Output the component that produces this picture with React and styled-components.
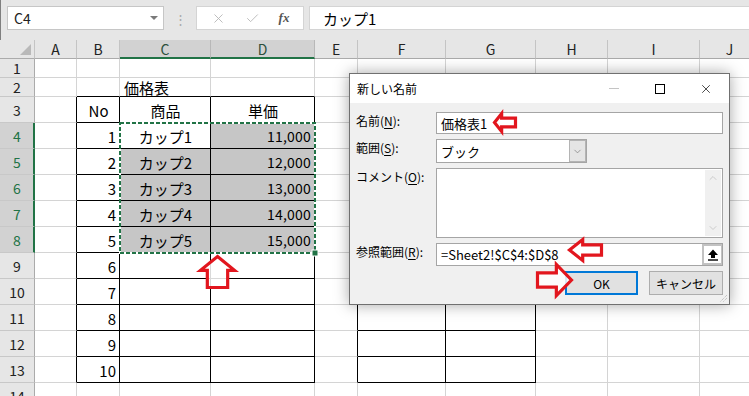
import React from "react";
import styled, { createGlobalStyle } from "styled-components";
import { X, Check, ChevronUp, ChevronDown } from "lucide-react";

const SHEET_FONT = `"Noto Sans CJK JP", "Liberation Sans", sans-serif`;
const UI_FONT = `"Noto Sans CJK JP", "Noto Sans", sans-serif`;
const GREEN = "#217346";
const RED = "#e2161e";

const GlobalStyle = createGlobalStyle`
  html, body {
    margin: 0;
    padding: 0;
    background: #fff;
    overflow: hidden;
  }
  * {
    box-sizing: border-box;
  }
`;

const Window = styled.div`
  position: relative;
  width: 749px;
  height: 396px;
  overflow: hidden;
  background: #fff;
  font-family: ${SHEET_FONT};
  color: #000;
`;

/* formula bar */
const FormulaBar = styled.div`
  display: flex;
  align-items: flex-start;
  height: 40px;
  padding: 6px 0 0 6px;
  background: #e6e6e6;
  border-left: 1px solid #7f7f7f;
`;
const NameBox = styled.div`
  display: flex;
  align-items: center;
  justify-content: space-between;
  width: 157px;
  height: 24px;
  padding: 0 5px 0 6px;
  background: #fff;
  border: 1px solid #c6c6c6;
  font-size: 14px;
  color: #222;
`;
const DropTriangle = styled.span`
  width: 0;
  height: 0;
  border-left: 4px solid transparent;
  border-right: 4px solid transparent;
  border-top: 4px solid #7a7a7a;
`;
const Grip = styled.div`
  display: flex;
  align-items: center;
  justify-content: center;
  width: 32px;
  height: 24px;
  color: #a9a9a9;
  font-size: 13px;
`;
const FxBox = styled.div`
  display: flex;
  align-items: center;
  justify-content: space-around;
  width: 108px;
  height: 24px;
  padding: 0 4px;
  background: #fff;
  border: 1px solid #d4d4d4;
  color: #b5b5b5;
`;
const FxLabel = styled.span`
  font-family: "Liberation Serif", serif;
  font-style: italic;
  font-weight: bold;
  font-size: 13px;
  color: #555;
`;
const FormulaInput = styled.div`
  display: flex;
  align-items: center;
  flex: 1;
  height: 24px;
  margin-left: 5px;
  padding-left: 13px;
  background: #fff;
  border: 1px solid #d4d4d4;
  border-right: none;
  font-size: 15px;
`;

/* sheet grid */
const Sheet = styled.div`
  display: grid;
  grid-template-columns: 35px 42px 43px 91px 104px 43px 88px 90px 72px 92px 60px;
  grid-template-rows: 19px 19px 19px repeat(12, 26px);
`;
const Corner = styled.div`
  position: relative;
  background: #e6e6e6;
  border-right: 1px solid #c4c4c4;
  border-bottom: 1px solid #ababab;
  &::after {
    content: "";
    position: absolute;
    right: 3px;
    bottom: 3px;
    border-left: 11px solid transparent;
    border-bottom: 11px solid #b9b9b9;
  }
`;
const ColHeader = styled.div`
  display: flex;
  align-items: center;
  justify-content: center;
  background: ${(p) => (p.$selected ? "#d2d2d2" : "#e6e6e6")};
  border-right: 1px solid ${(p) => (p.$selected ? "#b8b8b8" : "#c4c4c4")};
  border-bottom: ${(p) => (p.$selected ? `2px solid ${GREEN}` : "1px solid #ababab")};
  color: ${(p) => (p.$selected ? "#2d4f3c" : "#222")};
  font-size: 14px;
`;
const RowHeader = styled.div`
  display: flex;
  align-items: center;
  justify-content: center;
  background: ${(p) => (p.$selected ? "#d2d2d2" : "#e6e6e6")};
  border-right: ${(p) => (p.$selected ? `2px solid ${GREEN}` : "1px solid #ababab")};
  border-bottom: 1px solid #c8c8c8;
  color: ${(p) => (p.$selected ? GREEN : "#222")};
  font-size: 14px;
  padding-left: ${(p) => (p.$selected ? "1px" : "0")};
`;
const Cell = styled.div`
  display: flex;
  align-items: center;
  justify-content: ${(p) =>
    p.$align === "right" ? "flex-end" : p.$align === "center" ? "center" : "flex-start"};
  padding: 1px 3px 0 4px;
  background: ${(p) => (p.$fill ? "#c6c6c6" : "#fff")};
  border-right: 1px solid ${(p) => (p.$rightDark ? "#000" : "#d4d4d4")};
  border-bottom: 1px solid ${(p) => (p.$bottomDark ? "#000" : "#d4d4d4")};
  font-size: ${(p) => (p.$numeric ? "14px" : "15px")};
  letter-spacing: ${(p) => (p.$numeric ? "0.2px" : "0")};
  white-space: nowrap;
  overflow: visible;
`;

const Ants = styled.svg`
  position: absolute;
  left: 119px;
  top: 122px;
  overflow: visible;
`;

/* dialog */
const Dialog = styled.div`
  position: absolute;
  left: 349px;
  top: 73px;
  width: 381px;
  height: 232px;
  display: flex;
  flex-direction: column;
  background: #f0f0f0;
  border: 1px solid #707070;
  box-shadow: 0 0 14px rgba(0, 0, 0, 0.35);
  font-family: ${UI_FONT};
  font-size: 12px;
  color: #000;
`;
const TitleBar = styled.div`
  display: flex;
  align-items: center;
  height: 29px;
  padding-left: 7px;
  background: #fff;
`;
const Title = styled.div`
  flex: 1;
  font-size: 12px;
`;
const TitleButton = styled.div`
  display: flex;
  align-items: center;
  justify-content: center;
  width: 46px;
  height: 29px;
`;
const MinLine = styled.span`
  width: 10px;
  height: 1px;
  background: #c4c4c4;
`;
const MaxBox = styled.span`
  width: 10px;
  height: 10px;
  border: 1px solid #000;
`;
const Form = styled.div`
  display: grid;
  grid-template-columns: 80px 287px;
  grid-template-rows: 22px 24px 70px 23px 24px;
  row-gap: 5px;
  padding: 9px 0 0 6px;
`;
const Label = styled.div`
  padding-top: 1px;
  line-height: 16px;
  font-size: 12px;
  white-space: nowrap;
  u {
    text-decoration-thickness: 1px;
    text-underline-offset: 2px;
  }
`;
const TextBox = styled.div`
  display: flex;
  align-items: center;
  width: ${(p) => (p.$width ? `${p.$width}px` : "100%")};
  padding-left: 4px;
  background: #fff;
  border: 1px solid #a5a5a5;
  font-size: 13px;
  white-space: nowrap;
`;
const TextValue = styled.span`
  flex: 1;
`;
const SelectButton = styled.div`
  display: flex;
  align-items: center;
  justify-content: center;
  width: 17px;
  height: 100%;
  background: #e5e5e5;
  border: 1px solid #b4b4b4;
  color: #777;
`;
const TextArea = styled.div`
  display: flex;
  justify-content: flex-end;
  padding: 1px;
  background: #fff;
  border: 1px solid #a5a5a5;
`;
const ScrollStrip = styled.div`
  display: flex;
  flex-direction: column;
  justify-content: space-between;
  align-items: center;
  width: 16px;
  padding: 2px 0;
  background: #f0f0f0;
  color: #c2c2c2;
`;
const CollapseButton = styled.div`
  display: flex;
  align-items: center;
  justify-content: center;
  width: 20px;
  height: 100%;
  background: #fff;
  border: 2px solid #c2c2c2;
  border-right-width: 1px;
`;
const ButtonRow = styled.div`
  grid-column: 1 / -1;
  display: flex;
  justify-content: flex-end;
  gap: 11px;
`;
const Button = styled.div`
  display: flex;
  align-items: center;
  justify-content: center;
  width: ${(p) => p.$width}px;
  height: 24px;
  background: #e1e1e1;
  border: ${(p) => (p.$default ? "2px solid #0078d7" : "1px solid #adadad")};
  font-size: 12px;
`;
const ResizeGrip = styled.svg`
  position: absolute;
  right: 1px;
  bottom: 1px;
`;

const Pointer = styled.svg`
  position: absolute;
  left: ${(p) => p.$x}px;
  top: ${(p) => p.$y}px;
  overflow: visible;
`;

function RedArrow({ dir, x, y, w, h, shaft = 0.42, head = 0.45 }) {
  const s = 1.5;
  let pts;
  if (dir === "left" || dir === "right") {
    const t = (h * (1 - shaft)) / 2;
    const b = h - t;
    const hx = w * head;
    pts = [[s, h / 2], [hx, s], [hx, t], [w - s, t], [w - s, b], [hx, b], [hx, h - s]];
    if (dir === "right") pts = pts.map(([px, py]) => [w - px, py]);
  } else {
    const l = (w * (1 - shaft)) / 2;
    const r = w - l;
    const hy = h * head;
    pts = [[w / 2, s], [w - s, hy], [r, hy], [r, h - s], [l, h - s], [l, hy], [s, hy]];
  }
  return (
    <Pointer $x={x} $y={y} width={w} height={h}>
      <polygon
        points={pts.map((p) => p.join(",")).join(" ")}
        fill="#fff"
        fillOpacity="0.85"
        stroke={RED}
        strokeWidth="3.2"
        strokeLinejoin="miter"
      />
    </Pointer>
  );
}

const COLS = ["A", "B", "C", "D", "E", "F", "G", "H", "I", "J"];
const ROWS = Array.from({ length: 14 }, (_, i) => i + 1);

const contents = {
  C2: { text: "価格表", align: "left" },
  B3: { text: "No", align: "center" },
  C3: { text: "商品", align: "center" },
  D3: { text: "単価", align: "center" },
};
for (let i = 1; i <= 10; i++) contents[`B${i + 3}`] = { text: String(i), align: "right" };
["11,000", "12,000", "13,000", "14,000", "15,000"].forEach((price, i) => {
  contents[`C${i + 4}`] = { text: `カップ${i + 1}`, align: "center" };
  contents[`D${i + 4}`] = { text: price, align: "right", numeric: true };
});

const tables = [
  { r0: 3, r1: 13, c0: 1, c1: 3 },
  { r0: 3, r1: 13, c0: 5, c1: 6 },
];
const inRange = (r, c, t) => r >= t.r0 && r <= t.r1 && c >= t.c0 && c <= t.c1;

function cellProps(r, c) {
  let rightDark = false;
  let bottomDark = false;
  tables.forEach((t) => {
    if (inRange(r, c, t)) {
      rightDark = true;
      bottomDark = true;
    }
    if (c === t.c0 - 1 && r >= t.r0 && r <= t.r1) rightDark = true;
    if (r === t.r0 - 1 && c >= t.c0 && c <= t.c1) bottomDark = true;
  });
  const fill = r >= 4 && r <= 8 && c >= 2 && c <= 3 && !(r === 4 && c === 2);
  return { rightDark, bottomDark, fill };
}

function CollapseIcon() {
  return (
    <svg width="12" height="12" viewBox="0 0 12 12">
      <polygon points="6,0.5 11,6 8,6 8,9 4,9 4,6 1,6" fill="#000" />
      <rect x="1" y="10.3" width="10" height="1.4" fill="#000" />
    </svg>
  );
}

export default function App() {
  return (
    <Window>
      <GlobalStyle />
      <FormulaBar>
        <NameBox>
          C4
          <DropTriangle />
        </NameBox>
        <Grip>⋮</Grip>
        <FxBox>
          <X size={15} strokeWidth={1.4} />
          <Check size={15} strokeWidth={1.4} />
          <FxLabel>fx</FxLabel>
        </FxBox>
        <FormulaInput>カップ1</FormulaInput>
      </FormulaBar>

      <Sheet>
        <Corner />
        {COLS.map((col, c) => (
          <ColHeader key={col} $selected={c === 2 || c === 3}>
            {col}
          </ColHeader>
        ))}
        {ROWS.map((r) => (
          <React.Fragment key={r}>
            <RowHeader $selected={r >= 4 && r <= 8}>{r}</RowHeader>
            {COLS.map((col, c) => {
              const p = cellProps(r, c);
              const item = contents[`${col}${r}`];
              return (
                <Cell
                  key={col}
                  $fill={p.fill}
                  $rightDark={p.rightDark}
                  $bottomDark={p.bottomDark}
                  $align={item ? item.align : "left"}
                  $numeric={item && item.numeric}
                >
                  {item ? item.text : null}
                </Cell>
              );
            })}
          </React.Fragment>
        ))}
      </Sheet>

      <Ants width="197" height="132">
        <rect x="1" y="1" width="195" height="130" fill="none" stroke="#fff" strokeWidth="2" />
        <rect
          x="1"
          y="1"
          width="195"
          height="130"
          fill="none"
          stroke={GREEN}
          strokeWidth="2"
          strokeDasharray="4 2"
        />
        <rect x="193" y="128" width="6" height="6" fill={GREEN} stroke="#fff" strokeWidth="1" />
      </Ants>

      <RedArrow dir="up" x={199} y={255} w={37} h={34} shaft={0.55} head={0.45} />

      <Dialog>
        <TitleBar>
          <Title>新しい名前</Title>
          <TitleButton>
            <MinLine />
          </TitleButton>
          <TitleButton>
            <MaxBox />
          </TitleButton>
          <TitleButton>
            <X size={14} strokeWidth={1.2} color="#000" />
          </TitleButton>
        </TitleBar>
        <Form>
          <Label>
            名前(<u>N</u>):
          </Label>
          <TextBox>
            <TextValue>価格表1</TextValue>
          </TextBox>

          <Label>
            範囲(<u>S</u>):
          </Label>
          <TextBox $width={151}>
            <TextValue>ブック</TextValue>
            <SelectButton>
              <ChevronDown size={11} strokeWidth={1.5} />
            </SelectButton>
          </TextBox>

          <Label>
            コメント(<u>O</u>):
          </Label>
          <TextArea>
            <ScrollStrip>
              <ChevronUp size={12} strokeWidth={1.6} />
              <ChevronDown size={12} strokeWidth={1.6} />
            </ScrollStrip>
          </TextArea>

          <Label>
            参照範囲(<u>R</u>):
          </Label>
          <TextBox>
            <TextValue>=Sheet2!$C$4:$D$8</TextValue>
            <CollapseButton>
              <CollapseIcon />
            </CollapseButton>
          </TextBox>

          <ButtonRow>
            <Button $width={73} $default>
              OK
            </Button>
            <Button $width={74}>キャンセル</Button>
          </ButtonRow>
        </Form>
        <ResizeGrip width="10" height="10">
          <line x1="9" y1="2" x2="2" y2="9" stroke="#b0b0b0" strokeWidth="1" strokeDasharray="1 1" />
          <line x1="9" y1="5" x2="5" y2="9" stroke="#b0b0b0" strokeWidth="1" strokeDasharray="1 1" />
        </ResizeGrip>
      </Dialog>

      <RedArrow dir="left" x={493} y={112} w={24} h={21} shaft={0.42} head={0.36} />
      <RedArrow dir="left" x={568} y={238} w={35} h={24} shaft={0.42} head={0.42} />
      <RedArrow dir="right" x={536} y={263} w={37} h={34} shaft={0.42} head={0.45} />
    </Window>
  );
}
